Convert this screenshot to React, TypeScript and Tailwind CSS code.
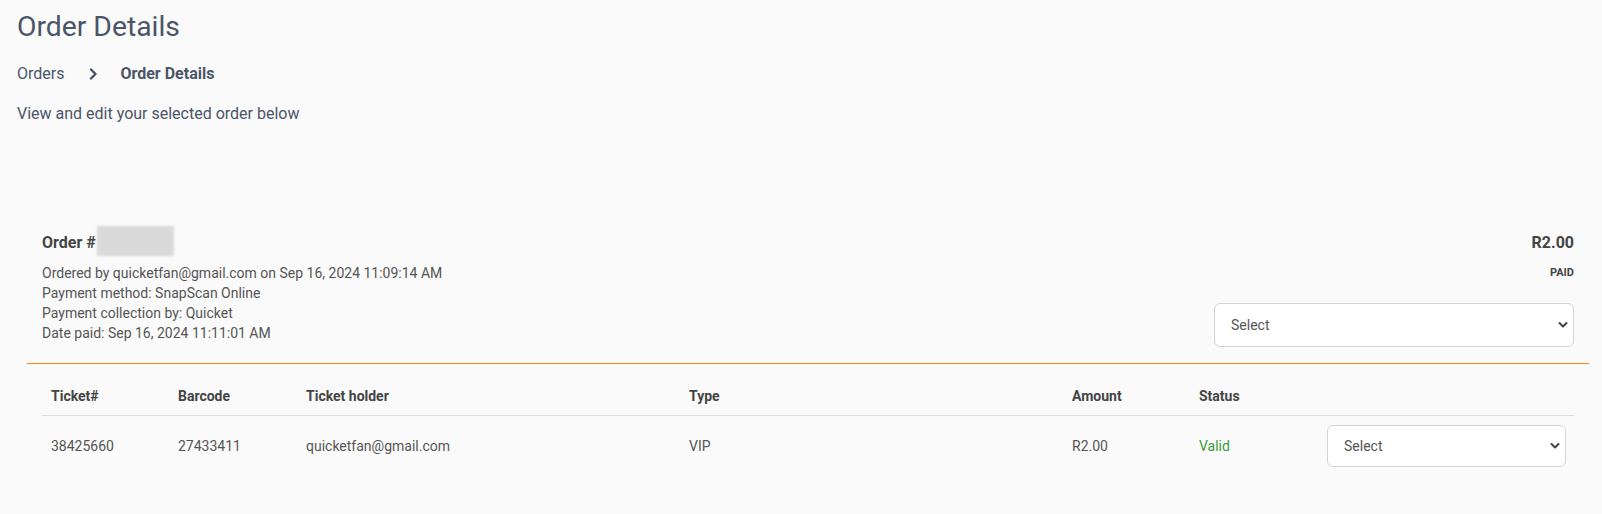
import React from "react";

function SelectBox({ className }: { className: string }) {
  return (
    <div className={`relative ${className}`}>
      <select
        defaultValue=""
        className="h-full w-full appearance-none rounded-[6px] border border-[#d4d4d4] bg-white pl-[16px] pr-[30px] text-[14px] text-[#555] outline-none"
        style={{ fontFamily: "Roboto, sans-serif" }}
      >
        <option value="">Select</option>
      </select>
      <svg
        className="pointer-events-none absolute right-[6px] top-1/2 -translate-y-1/2"
        width="10"
        height="7"
        viewBox="0 0 10 7"
        fill="none"
      >
        <path d="M1.5 1.5L5 5L8.5 1.5" stroke="#444" strokeWidth="2" strokeLinecap="round" strokeLinejoin="round" />
      </svg>
    </div>
  );
}

const cols = "grid grid-cols-[127px_128px_383px_383px_127px_128px_256px]";

export default function App() {
  return (
    <div
      className="min-h-[514px] w-full bg-[#fafafa] text-[#4a5568]"
      style={{ fontFamily: "Roboto, 'Noto Sans', sans-serif" }}
    >
      <div className="px-[17px] pt-[10px]">
        <h1 className="text-[28.3px] font-normal leading-[34px] text-[#4a5568]">Order Details</h1>
        <div className="mt-[18px] flex items-center text-[16px] leading-[24px]">
          <span className="text-[#4a5568]">Orders</span>
          <svg className="ml-[25px] mr-[22px]" width="9" height="12" viewBox="0 0 9 12" fill="none">
            <path d="M2 1.5L6.5 6L2 10.5" stroke="#4a5568" strokeWidth="2.4" strokeLinecap="round" strokeLinejoin="round" />
          </svg>
          <span className="text-[16px] font-bold text-[#4a5568]">Order Details</span>
        </div>
        <p className="mt-[16px] text-[16px] leading-[24px] text-[#4a5568]">View and edit your selected order below</p>
      </div>

      <div className="ml-[27px] mr-[13px] mt-[100px] px-[15px] pb-[20px]">
        <div className="flex justify-between">
          <div>
            <div className="flex items-start">
              <span className="mt-[7px] text-[16px] font-bold leading-[20px] text-[#444]">Order #</span>
              <span className="ml-[1px] inline-block h-[30px] w-[77px] bg-[#dadada] blur-[1px]" />
            </div>
            <div className="mt-[7px] text-[14px] leading-[20px] text-[#555]">
              <div>Ordered by quicketfan@gmail.com on Sep 16, 2024 11:09:14 AM</div>
              <div>Payment method: SnapScan Online</div>
              <div>Payment collection by: Quicket</div>
              <div>Date paid: Sep 16, 2024 11:11:01 AM</div>
            </div>
          </div>
          <div className="flex flex-col items-end">
            <div className="mt-[6.5px] text-[16px] font-bold leading-[20px] text-[#444]">R2.00</div>
            <div className="mt-[12.5px] text-[11px] font-bold leading-[16px] text-[#444]">PAID</div>
            <SelectBox className="mt-[22px] h-[44px] w-[360px]" />
          </div>
        </div>

        <div className="-mx-[15px] mt-[16px] h-px bg-[#ff8200]" />

        <div className="mt-[8px] text-[14px]">
          <div className={`${cols} border-b border-[#dedede] font-bold text-[#444]`}>
            {["Ticket#", "Barcode", "Ticket holder", "Type", "Amount", "Status", ""].map((h, i) => (
              <div key={i} className="pb-[9px] pl-[9px] pt-[14px] leading-[20px]">
                {h}
              </div>
            ))}
          </div>
          <div className={`${cols} items-center text-[#555]`}>
            <div className="pl-[9px] leading-[20px]">38425660</div>
            <div className="pl-[9px] leading-[20px]">27433411</div>
            <div className="pl-[9px] leading-[20px]">quicketfan@gmail.com</div>
            <div className="pl-[9px] leading-[20px]">VIP</div>
            <div className="pl-[9px] leading-[20px]">R2.00</div>
            <div className="pl-[9px] leading-[20px] text-[#3a9b3a]">Valid</div>
            <div className="pb-[9px] pl-[9px] pr-[8px] pt-[9px]">
              <SelectBox className="h-[42px] w-[239px]" />
            </div>
          </div>
        </div>
      </div>
    </div>
  );
}
